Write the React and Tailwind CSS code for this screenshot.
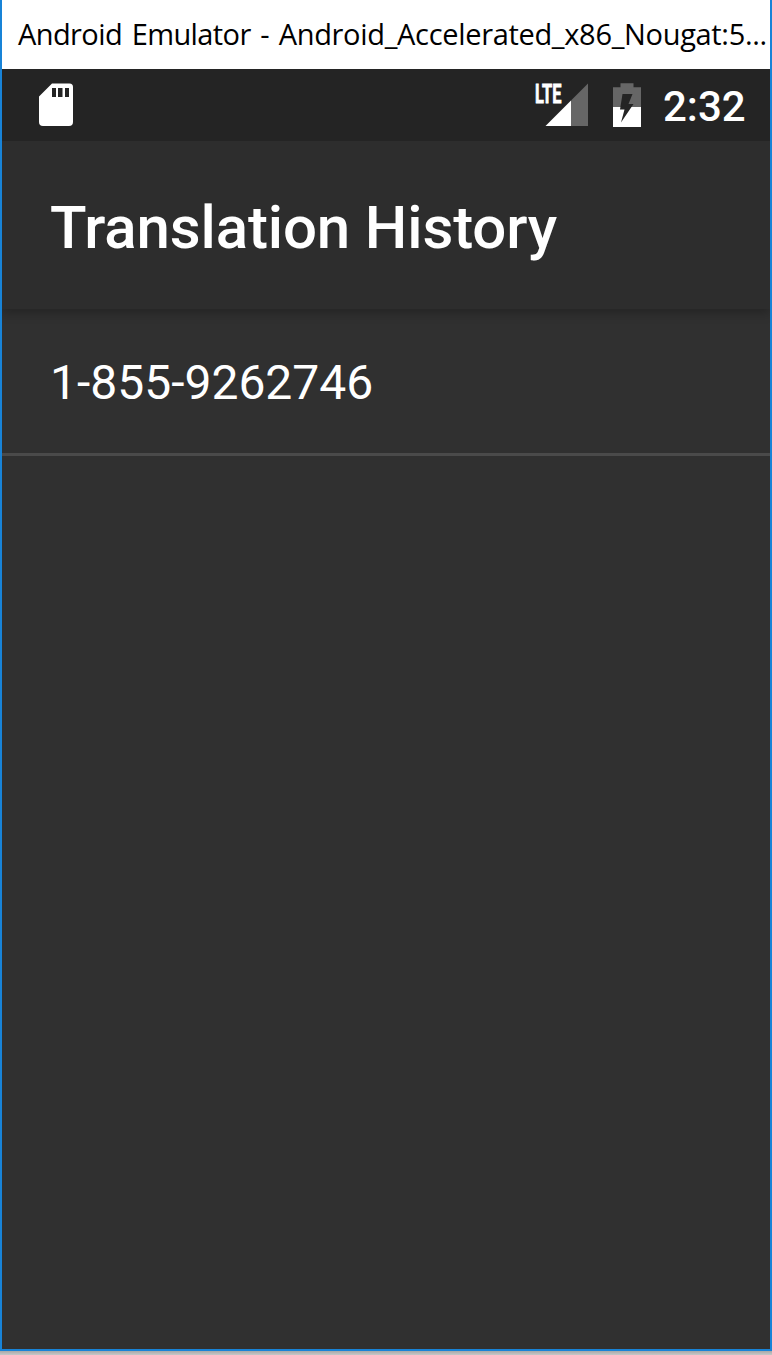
function SdCardIcon() {
  return (
    <svg width="34" height="44" viewBox="0 0 34 44" className="block">
      <path
        fill="#fff"
        fillRule="evenodd"
        transform="translate(0 0.600)"
        d="M13 0H30.5A3.5 3.5 0 0 1 34 3.500V38.500A4 4 0 0 1 30 42.500H4A4 4 0 0 1 0 38.500V13ZM13 4.500V13.500H17V4.500ZM19 4.500V13.500H23.500V4.500ZM26 4.500V13.500H30V4.500Z"
      />
    </svg>
  );
}

function SignalIcon() {
  return (
    <div className="relative h-[43px] w-[53px]">
      <svg width="53" height="43" viewBox="0 0 53 43" className="block">
        <path fill="#666" d="M53 0.500V43H36V17.500Z" />
        <path fill="#fff" d="M36 17.500V43H10.500Z" />
      </svg>
      <span className="absolute -top-[2px] left-0 origin-left scale-x-[0.63] font-['Roboto',sans-serif] text-[26px] leading-[26px] font-bold text-white [-webkit-text-stroke:0.8px_white]">
        LTE
      </span>
    </div>
  );
}

function BatteryIcon() {
  return (
    <svg width="28" height="44" viewBox="0 0 28 44" className="block">
      <path fill="#666" d="M7.500 0.300H20.500V4.300H28V24H0V4.300H7.500Z" />
      <path fill="#fff" d="M0 24H28V44H0Z" />
      <path fill="#242424" d="M9.500 11H19.500L15.500 21H20.500L8 39.500L11.500 26.500H7Z" />
    </svg>
  );
}

export default function App() {
  return (
    <div className="flex h-[1355px] w-[772px] flex-col overflow-hidden bg-[#b8b8b8]">
      <div className="flex h-[1351px] flex-col border-x-2 border-b-2 border-[#1883d7] bg-[#303030]">
        <header className="flex h-[69px] shrink-0 items-center bg-white pb-[1px] pl-[16px] font-['Open_Sans',sans-serif] text-[29px] leading-[40px] whitespace-pre text-black">
          <span className="tracking-[-0.6px] [word-spacing:2.7px]">{"Android Emulator - "}</span>
          <span className="tracking-[-0.32px]">Android_Accelerated_x86_Nougat:5...</span>
        </header>
        <div className="flex h-[72px] shrink-0 items-start bg-[#242424] pt-[14px] pr-[24px] pl-[37px]">
          <SdCardIcon />
          <div className="ml-auto flex items-start">
            <SignalIcon />
            <div className="ml-[25px]">
              <BatteryIcon />
            </div>
            <span className="ml-[22px] w-[83px] font-['Roboto',sans-serif] text-[42px] leading-[48px] font-medium whitespace-nowrap text-white">
              2:32
            </span>
          </div>
        </div>
        <div className="z-10 flex h-[168px] shrink-0 items-center bg-[#2d2d2d] pt-[6px] pl-[48px] shadow-[0_4px_10px_rgba(0,0,0,0.25)] [clip-path:inset(0_0_-20px_0)]">
          <h1 className="font-['Roboto',sans-serif] text-[60px] leading-[70px] font-medium tracking-[-0.14px] whitespace-nowrap text-white">
            Translation History
          </h1>
        </div>
        <ul>
          <li className="flex h-[147px] items-center border-b-3 border-[#4a4a4a] pt-[3px] pl-[48px] font-['Roboto',sans-serif] text-[48px] leading-[56px] text-white">
            1-855-9262746
          </li>
        </ul>
      </div>
      <div className="h-1 bg-linear-to-b from-[#a8a8a8] to-[#c8c8c8]" />
    </div>
  );
}
